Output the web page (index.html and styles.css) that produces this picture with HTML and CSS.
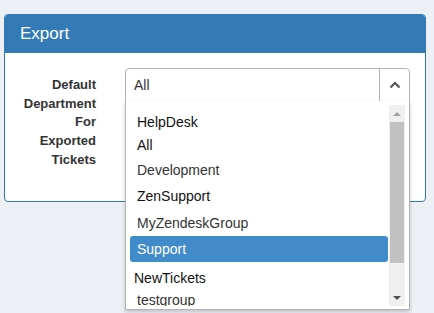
FILE: index.html
```html
<!DOCTYPE html>
<html lang="en">
<head>
  <meta charset="UTF-8">
  <title>Export</title>
  <link rel="stylesheet" href="styles.css">
</head>
<body>
  <div class="panel">
    <div class="panel-heading">Export</div>
    <div class="panel-body">
      <div class="form-group">
        <label class="control-label">Default Department For Exported Tickets</label>
        <div class="select">
          <div class="select-head">
            <span class="select-value">All</span>
            <span class="select-arrow">
              <svg width="12" height="8" viewBox="0 0 12 8"><path d="M1.5 6.5 L6 2 L10.5 6.5" fill="none" stroke="#555" stroke-width="2.2"/></svg>
            </span>
          </div>
          <div class="dropdown">
            <div class="options">
              <div class="group">HelpDesk</div>
              <div class="group g-all">All</div>
              <div class="option">Development</div>
              <div class="group g-zen">ZenSupport</div>
              <div class="option">MyZendeskGroup</div>
              <div class="option active">Support</div>
              <div class="group g-new">NewTickets</div>
              <div class="option last">testgroup</div>
            </div>
            <div class="scrollbar">
              <span class="arrow up"></span>
              <span class="thumb"></span>
              <span class="arrow down"></span>
            </div>
          </div>
        </div>
      </div>
    </div>
  </div>
</body>
</html>
```

FILE: styles.css
```css
html {
  height: 100%;
}

body {
  margin: 0;
  box-sizing: border-box;
  min-height: 100%;
  padding: 14px 8px 0 4px;
  background: #edf0f5;
  font-family: 'Liberation Sans', Arial, sans-serif;
  color: #333;
}

.panel {
  width: 420px;
  border: 1px solid #337ab7;
  border-radius: 4px;
  background: white;
}

.panel-heading {
  background: #337ab7;
  color: white;
  font-size: 17px;
  height: 38px;
  line-height: 38px;
  padding-left: 15px;
  border-radius: 3px 3px 0 0;
}

.panel-body {
  padding: 15px 15px 14px 15px;
}

.form-group {
  display: flex;
  gap: 29px;
  height: 119px;
}

.control-label {
  width: 76px;
  text-align: right;
  font-weight: bold;
  font-size: 13px;
  line-height: 18.7px;
  padding-top: 8px;
}

.select {
  position: relative;
  flex: 1;
  height: 34px;
}

.select-head {
  display: flex;
  height: 32px;
  border: 1px solid #b3b3b3;
  border-radius: 4px 4px 0 0;
}

.select-value {
  flex: 1;
  font-size: 14px;
  line-height: 32px;
  padding-left: 8px;
  color: #333;
}

.select-arrow {
  width: 29px;
  border-left: 1px solid #b3b3b3;
  display: flex;
  align-items: center;
  justify-content: center;
}

.dropdown {
  position: absolute;
  top: 33px;
  left: 0;
  right: 0;
  height: 201px;
  display: flex;
  padding: 4px 4px 3px 0;
  background: white;
  border: 1px solid #b3b3b3;
  border-top: 0;
  box-shadow: 0 2px 4px rgba(0, 0, 0, 0.2);
  overflow: hidden;
}

.options {
  flex: 1;
  padding-top: 6px;
  overflow: hidden;
}

.group {
  font-size: 14px;
  color: #111;
  padding-left: 11px;
  height: 22px;
  line-height: 22px;
}

.g-all {
  height: 24px;
  line-height: 24px;
}

.g-zen {
  height: 27px;
  line-height: 27px;
}

.g-new {
  margin-top: 6px;
  padding-left: 8px;
  height: 20px;
  line-height: 20px;
}

.option {
  font-size: 14px;
  color: #333;
  margin: 0 1px 0 4px;
  padding-left: 7px;
  height: 26px;
  line-height: 26px;
  border-radius: 3px;
}

.option.last {
  line-height: 24px;
}

.option.active {
  background: #428bca;
  color: white;
}

.scrollbar {
  width: 16px;
  background: #f0f0f0;
  display: flex;
  flex-direction: column;
  align-items: center;
}

.thumb {
  width: 14px;
  height: 141px;
  background: #c1c1c1;
  margin-top: 6px;
}

.arrow {
  width: 0;
  height: 0;
  border-left: 4px solid transparent;
  border-right: 4px solid transparent;
}

.arrow.up {
  margin-top: 7px;
  border-bottom: 4px solid #a3a3a3;
}

.arrow.down {
  margin-top: auto;
  margin-bottom: 6px;
  border-top: 4px solid #505050;
}
```
